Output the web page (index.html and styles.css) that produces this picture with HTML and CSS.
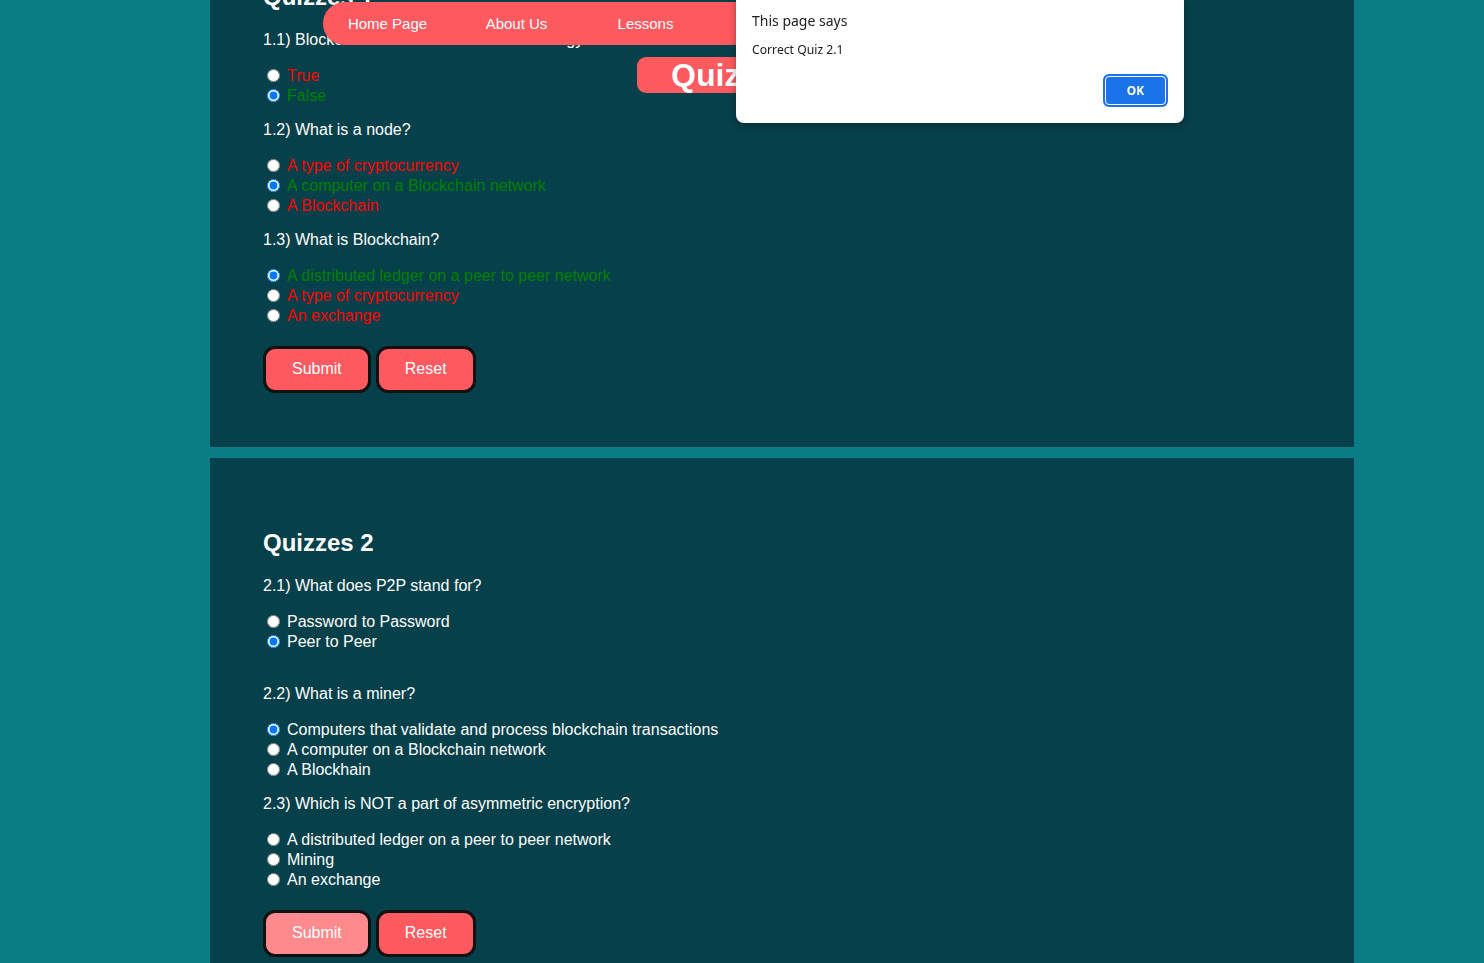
FILE: index.html
```html
<!DOCTYPE html>
<html lang="en">
<head>
<meta charset="utf-8">
<title>Quizzes</title>
<link rel="stylesheet" href="styles.css">
</head>
<body>
<nav class="topnav">
  <a class="nav-link" href="#">Home Page</a>
  <a class="nav-link" href="#">About Us</a>
  <a class="nav-link" href="#">Lessons</a>
  <a class="nav-link" href="#">Quizzes</a>
</nav>
<div class="page-banner">Quizzes</div>

<main class="page">
  <section class="quiz-section">
    <h2 class="quiz-title">Quizzes 1</h2>
    <form class="quiz-form">
      <p class="question">1.1) Blockchain is a decentralized technology</p>
      <div class="options">
        <label class="option wrong"><input type="radio" name="q11">True</label>
        <label class="option right"><input type="radio" name="q11" checked>False</label>
      </div>
      <p class="question">1.2) What is a node?</p>
      <div class="options">
        <label class="option wrong"><input type="radio" name="q12">A type of cryptocurrency</label>
        <label class="option right"><input type="radio" name="q12" checked>A computer on a Blockchain network</label>
        <label class="option wrong"><input type="radio" name="q12">A Blockchain</label>
      </div>
      <p class="question">1.3) What is Blockchain?</p>
      <div class="options">
        <label class="option right"><input type="radio" name="q13" checked>A distributed ledger on a peer to peer network</label>
        <label class="option wrong"><input type="radio" name="q13">A type of cryptocurrency</label>
        <label class="option wrong"><input type="radio" name="q13">An exchange</label>
      </div>
      <div class="actions">
        <button type="button" class="btn">Submit</button>
        <button type="reset" class="btn">Reset</button>
      </div>
    </form>
  </section>

  <section class="quiz-section">
    <h2 class="quiz-title">Quizzes 2</h2>
    <form class="quiz-form">
      <p class="question">2.1) What does P2P stand for?</p>
      <div class="options options-spaced">
        <label class="option"><input type="radio" name="q21">Password to Password</label>
        <label class="option"><input type="radio" name="q21" checked>Peer to Peer</label>
      </div>
      <p class="question">2.2) What is a miner?</p>
      <div class="options">
        <label class="option"><input type="radio" name="q22" checked>Computers that validate and process blockchain transactions</label>
        <label class="option"><input type="radio" name="q22">A computer on a Blockchain network</label>
        <label class="option"><input type="radio" name="q22">A Blockhain</label>
      </div>
      <p class="question">2.3) Which is NOT a part of asymmetric encryption?</p>
      <div class="options">
        <label class="option"><input type="radio" name="q23">A distributed ledger on a peer to peer network</label>
        <label class="option"><input type="radio" name="q23">Mining</label>
        <label class="option"><input type="radio" name="q23">An exchange</label>
      </div>
      <div class="actions">
        <button type="button" class="btn btn-light">Submit</button>
        <button type="reset" class="btn">Reset</button>
      </div>
    </form>
  </section>
</main>

<div class="alert-dialog" role="alertdialog">
  <div class="alert-title">This page says</div>
  <div class="alert-message">Correct Quiz 2.1</div>
  <div class="alert-actions">
    <button type="button" class="alert-ok">OK</button>
  </div>
</div>
</body>
</html>
```

FILE: styles.css
```css
html, body {
  margin: 0;
  padding: 0;
}

body {
  background: #0a7c86;
  font-family: "Liberation Sans", Arial, sans-serif;
  font-size: 16px;
  color: #ffffff;
}

.page {
  display: flex;
  flex-direction: column;
  gap: 11px;
  width: 1144px;
  margin: -88px 0 0 210px;
}

.quiz-section {
  background: #06404a;
  padding: 51px 52px 54px 53px;
}

.quiz-title {
  margin: 19.92px 0;
  font-size: 24px;
  font-weight: bold;
  color: #ffffff;
}

.quiz-form {
  margin: 0;
}

.question {
  margin: 16px 0;
  color: #ffffff;
}

.options {
  display: flex;
  flex-direction: column;
}

.options-spaced {
  padding-bottom: 18px;
}

.option {
  display: flex;
  align-items: center;
  box-sizing: border-box;
  height: 20px;
  padding-top: 2px;
  color: #ffffff;
}

.option input {
  width: 13px;
  height: 13px;
  margin: 0 7px 0 4px;
}

.option.wrong {
  color: #ff0000;
}

.option.right {
  color: #008000;
}

.actions {
  display: flex;
  gap: 5px;
  margin-top: 21px;
}

.btn {
  height: 47px;
  padding: 0 26px;
  border: 3px solid #111111;
  border-radius: 12px;
  background: #ff5a5f;
  color: #ffffff;
  font-family: "Liberation Sans", Arial, sans-serif;
  font-size: 16px;
}

.btn-light {
  background: #ff8a8d;
}

/* fixed header */
.topnav {
  position: fixed;
  top: 2px;
  left: 323px;
  width: 560px;
  height: 43px;
  display: flex;
  align-items: center;
  background: #ff5a5f;
  border-radius: 22px 0 0 22px;
}

.nav-link {
  width: 129px;
  text-align: center;
  color: #ffffff;
  text-decoration: none;
  font-size: 15px;
}

.page-banner {
  position: fixed;
  top: 57px;
  left: 637px;
  height: 36px;
  line-height: 36px;
  padding: 0 34px;
  background: #ff5a5f;
  border-radius: 9px;
  color: #ffffff;
  font-size: 32px;
  font-weight: bold;
}

/* browser alert */
.alert-dialog {
  position: fixed;
  top: 0;
  left: 736px;
  width: 448px;
  height: 123px;
  box-sizing: border-box;
  padding: 11px 18px 0 16px;
  background: #ffffff;
  border-radius: 0 0 8px 8px;
  box-shadow: 0 2px 8px rgba(0, 0, 0, 0.35);
  font-family: "Noto Sans", "Open Sans", sans-serif;
  color: #202124;
  display: flex;
  flex-direction: column;
}

.alert-title {
  font-size: 14px;
  line-height: 19px;
}

.alert-message {
  margin-top: 11px;
  font-size: 12.2px;
  line-height: 17px;
}

.alert-actions {
  display: flex;
  justify-content: flex-end;
  margin-top: 18px;
}

.alert-ok {
  width: 61px;
  height: 29px;
  border: 1px solid #ffffff;
  border-radius: 4px;
  background: #1a73e8;
  box-shadow: 0 0 0 2px #1a73e8;
  color: #ffffff;
  font-family: "Noto Sans", "Open Sans", sans-serif;
  font-size: 12px;
  font-weight: bold;
}
```
